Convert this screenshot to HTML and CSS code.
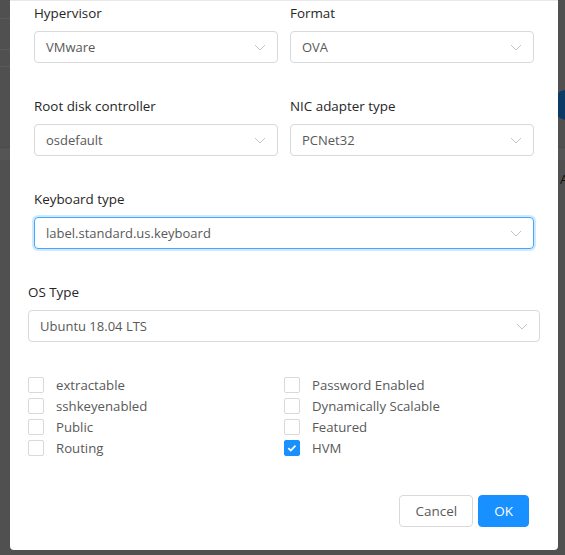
FILE: index.html
```html
<!DOCTYPE html>
<html>
<head>
<meta charset="utf-8">
<link rel="stylesheet" href="styles.css">
</head>
<body>
<div class="page">
  <div class="backdrop-decor">
    <div class="bd-line l1"></div>
    <div class="bd-line l2"></div>
    <div class="bd-line l3"></div>
    <div class="bd-band"></div>
    <div class="bd-circle"></div>
    <div class="bd-letter">A</div>
  </div>
  <div class="modal">
    <div class="grid2">
      <div class="item">
        <div class="label">Hypervisor</div>
        <div class="select"><span class="value">VMware</span><svg class="arrow" viewBox="0 0 12 12"><path d="M1 4 L6 9 L11 4"/></svg></div>
      </div>
      <div class="item">
        <div class="label">Format</div>
        <div class="select"><span class="value">OVA</span><svg class="arrow" viewBox="0 0 12 12"><path d="M1 4 L6 9 L11 4"/></svg></div>
      </div>
      <div class="item">
        <div class="label">Root disk controller</div>
        <div class="select"><span class="value">osdefault</span><svg class="arrow" viewBox="0 0 12 12"><path d="M1 4 L6 9 L11 4"/></svg></div>
      </div>
      <div class="item">
        <div class="label">NIC adapter type</div>
        <div class="select"><span class="value">PCNet32</span><svg class="arrow" viewBox="0 0 12 12"><path d="M1 4 L6 9 L11 4"/></svg></div>
      </div>
    </div>
    <div class="item">
      <div class="label">Keyboard type</div>
      <div class="select focused"><span class="value">label.standard.us.keyboard</span><svg class="arrow" viewBox="0 0 12 12"><path d="M1 4 L6 9 L11 4"/></svg></div>
    </div>
    <div class="item wide">
      <div class="label">OS Type</div>
      <div class="select"><span class="value">Ubuntu 18.04 LTS</span><svg class="arrow" viewBox="0 0 12 12"><path d="M1 4 L6 9 L11 4"/></svg></div>
    </div>
    <div class="checks">
      <label class="check"><span class="box"></span><span class="text">extractable</span></label>
      <label class="check"><span class="box"></span><span class="text">Password Enabled</span></label>
      <label class="check"><span class="box"></span><span class="text">sshkeyenabled</span></label>
      <label class="check"><span class="box"></span><span class="text">Dynamically Scalable</span></label>
      <label class="check"><span class="box"></span><span class="text">Public</span></label>
      <label class="check"><span class="box"></span><span class="text">Featured</span></label>
      <label class="check"><span class="box"></span><span class="text">Routing</span></label>
      <label class="check"><span class="box checked"><svg viewBox="0 0 16 16"><path d="M3.8 8.2 L6.6 10.9 L12 5.4"/></svg></span><span class="text">HVM</span></label>
    </div>
    <div class="footer">
      <button class="btn">Cancel</button>
      <button class="btn primary">OK</button>
    </div>
  </div>
</div>
</body>
</html>
```
FILE: styles.css
```css
html, body {
  margin: 0;
  padding: 0;
}
body {
  width: 565px;
  height: 555px;
  overflow: hidden;
  background: #505050;
  font-family: "Open Sans", "Noto Sans", sans-serif;
  font-size: 13px;
}
.page {
  position: relative;
  padding-left: 10px;
  display: flex;
}
.backdrop-decor {
  position: absolute;
  inset: 0;
  pointer-events: none;
}
.bd-line {
  position: absolute;
  left: 0;
  width: 10px;
  height: 1px;
  background: #5a5a5a;
}
.bd-line.l1 { top: 18px; }
.bd-line.l2 { top: 49px; }
.bd-line.l3 { top: 66px; }
.bd-band {
  position: absolute;
  left: 0;
  right: 0;
  top: 147px;
  height: 12px;
  background: #555555;
  border-top: 1px solid #4a4a4a;
}
.bd-circle {
  position: absolute;
  left: 552px;
  top: 90px;
  width: 30px;
  height: 30px;
  border-radius: 50%;
  background: #0c3a66;
}
.bd-letter {
  position: absolute;
  left: 560px;
  top: 170px;
  width: 5px;
  overflow: hidden;
  font-size: 13px;
  color: #111;
}
.modal {
  position: relative;
  width: 548px;
  height: 550px;
  box-sizing: border-box;
  background: #fff;
  border-top: 1px solid #e8e8e8;
  border-radius: 0 0 4px 4px;
  padding: 2px 24px 0 24px;
}
.grid2 {
  display: grid;
  grid-template-columns: 244px 244px;
  column-gap: 12px;
}
.item {
  margin-bottom: 33px;
}
.item.wide {
  margin-left: -6px;
  margin-right: -6px;
}
.label {
  line-height: 21px;
  height: 21px;
  margin-bottom: 7px;
  color: #262626;
  font-size: 13.4px;
}
.select {
  position: relative;
  height: 32px;
  box-sizing: border-box;
  border: 1px solid #d9d9d9;
  border-radius: 4px;
  display: flex;
  align-items: center;
  padding: 0 11px;
  background: #fff;
}
.select.focused {
  border-color: #40a9ff;
  box-shadow: 0 0 0 2px rgba(24, 144, 255, 0.2);
}
.value {
  color: #595959;
  font-size: 13px;
}
.arrow {
  position: absolute;
  right: 11px;
  top: 9px;
  width: 12px;
  height: 12px;
  fill: none;
  stroke: #c4c4c4;
  stroke-width: 1;
}
.checks {
  margin: -1px -6px 37px;
  display: grid;
  grid-template-columns: 256px 256px;
  grid-auto-rows: 21px;
}
.check {
  display: flex;
  align-items: center;
  gap: 12px;
  color: #595959;
  font-size: 13.2px;
}
.box {
  width: 16px;
  height: 16px;
  box-sizing: border-box;
  border: 1px solid #d9d9d9;
  border-radius: 2px;
  background: #fff;
  display: flex;
}
.box.checked {
  background: #1890ff;
  border-color: #1890ff;
}
.box svg {
  width: 14px;
  height: 14px;
  fill: none;
  stroke: #fff;
  stroke-width: 2;
}
.footer {
  display: flex;
  justify-content: flex-end;
  gap: 5px;
  margin-right: 5px;
}
.btn {
  height: 32px;
  padding: 0 15px;
  border: 1px solid #d9d9d9;
  border-radius: 4px;
  background: #fff;
  color: #595959;
  font-family: "Open Sans", "Noto Sans", sans-serif;
  font-size: 13.5px;
}
.btn.primary {
  background: #1890ff;
  border-color: #1890ff;
  color: #fff;
}
```
